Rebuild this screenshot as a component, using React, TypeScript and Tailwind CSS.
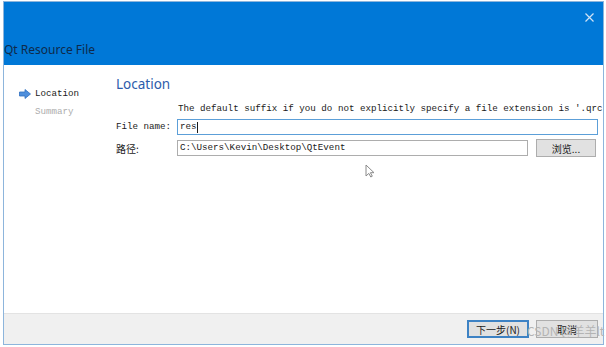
import React from "react";

const mono = { fontFamily: '"Liberation Mono", "Noto Sans CJK SC", monospace' };
const cjk = { fontFamily: '"Noto Sans CJK SC", "Liberation Sans", sans-serif' };

// Blue arrow marking the current wizard page
const NavArrow = () => (
    <svg width="12" height="10" viewBox="0 0 12 10" className="shrink-0">
        <path d="M0.5 3 H6 V0.5 L11.5 5 L6 9.5 V7 H0.5 Z" fill="#4f8fdc" stroke="#2f6fc0" strokeWidth="0.8" />
    </svg>
);

// Mouse pointer left over the dialog
const Cursor = () => (
    <svg width="11" height="14" viewBox="0 0 11 14" className="absolute left-[365px] top-[164px]">
        <path d="M1 1 V12 L3.8 9.4 L5.8 13 L7.3 12.2 L5.4 8.7 H9 Z" fill="#ffffff" stroke="#8a8a8a" strokeWidth="1" strokeLinejoin="round" />
    </svg>
);

export default function App() {
    return (
        <div className="relative w-[606px] h-[347px] overflow-hidden bg-white pl-[3px] pt-px">
            <div className="w-[601px] h-[344px] flex flex-col border border-[#8db5dc]">
                {/* Title bar */}
                <header className="relative h-[63px] bg-[#0078d7] shrink-0">
                    <div className="absolute left-0 top-[40px] text-[12px] leading-[16px] text-[#0f2a4a]" style={{ fontFamily: '"Noto Sans", "Liberation Sans", sans-serif' }}>
                        Qt Resource File
                    </div>
                    <svg width="9" height="9" viewBox="0 0 9 9" className="absolute right-[9px] top-[11px]">
                        <path d="M0.5 0.5 L8.5 8.5 M8.5 0.5 L0.5 8.5" stroke="#cfe2f5" strokeWidth="1.2" />
                    </svg>
                </header>

                {/* Body */}
                <div className="flex-1 flex bg-white">
                    {/* Wizard steps */}
                    <nav className="w-[112px] shrink-0 pl-[15px] pt-[23px] text-[9.2px]" style={mono}>
                        <div className="flex items-center gap-[4px] h-[12px] text-[#1a1a1a]">
                            <NavArrow />
                            <span>Location</span>
                        </div>
                        <div className="h-[12px] mt-[5px] pl-[16px] text-[#adadad]">Summary</div>
                    </nav>

                    {/* Page content */}
                    <section className="flex-1 min-w-0 pt-[10px] overflow-hidden">
                        <h1 className="text-[13.5px] leading-[18px] text-[#2d5cab]" style={{ fontFamily: '"Noto Sans", "Liberation Sans", sans-serif' }}>
                            Location
                        </h1>
                        <p className="mt-[10px] pl-[62px] h-[12px] leading-[12px] text-[9.2px] text-[#1a1a1a] whitespace-nowrap overflow-hidden" style={mono}>
                            The default suffix if you do not explicitly specify a file extension is '.qrc'.
                        </p>
                        <div className="mt-[4px] flex items-center h-[16px] pr-[5px]">
                            <label className="w-[61px] shrink-0 text-[9.2px] text-[#1a1a1a]" style={mono}>File name:</label>
                            <div className="flex-1 h-[16px] border border-[#5c9fd8] bg-white flex items-center px-[2px] text-[9.2px] text-[#1a1a1a]" style={mono}>
                                res<span className="inline-block w-px h-[11px] bg-[#1a1a1a]" />
                            </div>
                        </div>
                        <div className="mt-[4px] flex items-center h-[18px] pr-[5px]">
                            <label className="w-[61px] shrink-0 text-[10px] text-[#1a1a1a]" style={cjk}>路径:</label>
                            <div className="w-[351px] h-[16px] border border-[#adadad] bg-white flex items-center px-[2px] text-[9.2px] text-[#1a1a1a]" style={mono}>
                                C:\Users\Kevin\Desktop\QtEvent
                            </div>
                            <button className="ml-[8px] w-[60px] h-[18px] border border-[#adadad] bg-[#e1e1e1] text-[10px] text-[#1a1a1a] flex items-center justify-center" style={cjk}>
                                浏览...
                            </button>
                        </div>
                    </section>
                </div>

                {/* Footer buttons */}
                <footer className="h-[31px] shrink-0 bg-[#f0f0f0] border-t border-[#e3e3e3] flex items-center justify-end gap-[7px] pr-[5px]">
                    <button className="w-[62px] h-[18px] border-2 border-[#3d82c4] bg-[#e1e1e1] text-[10px] text-[#1a1a1a] flex items-center justify-center" style={cjk}>
                        下一步(N)
                    </button>
                    <button className="w-[62px] h-[18px] border border-[#adadad] bg-[#e1e1e1] text-[10px] text-[#1a1a1a] flex items-center justify-center" style={cjk}>
                        取消
                    </button>
                </footer>
            </div>

            <Cursor />

            {/* Watermark */}
            <div className="absolute left-[527px] top-[323px] text-[12px] leading-[15px] text-[#b4b4b4] whitespace-nowrap" style={cjk}>
                CSDN @羊羊lt
            </div>
        </div>
    );
}
